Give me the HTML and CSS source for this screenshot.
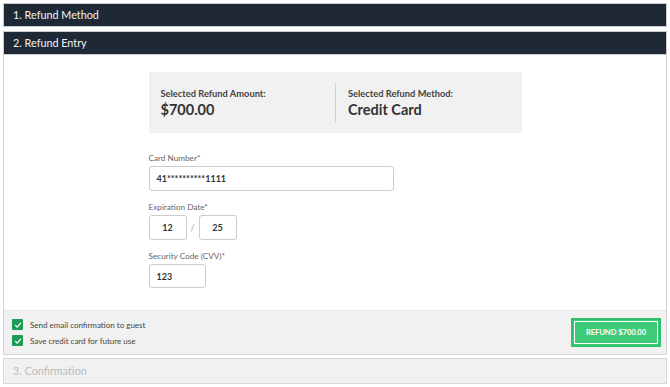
FILE: index.html
```html
<!DOCTYPE html>
<html lang="en">
<head>
    <meta charset="utf-8">
    <title>Refund</title>
    <link rel="stylesheet" href="styles.css">
</head>
<body>

<div class="step-header">1. Refund Method</div>

<div class="step-panel">
    <div class="step-header">2. Refund Entry</div>
    <div class="step-body">
        <div class="form-column">
            <div class="summary">
                <div class="summary-item">
                    <div class="summary-label">Selected Refund Amount:</div>
                    <div class="summary-value">$700.00</div>
                </div>
                <div class="summary-item with-divider">
                    <div class="summary-label">Selected Refund Method:</div>
                    <div class="summary-value">Credit Card</div>
                </div>
            </div>

            <label class="field-label">Card Number*</label>
            <div class="input card-input">41**********1111</div>

            <label class="field-label">Expiration Date*</label>
            <div class="date-row">
                <div class="input date-input">12</div>
                <span class="slash">/</span>
                <div class="input date-input">25</div>
            </div>

            <label class="field-label">Security Code (CVV)*</label>
            <div class="input cvv-input">123</div>
        </div>
    </div>
    <div class="step-footer">
        <div class="checks">
            <div class="check-row">
                <span class="checkbox">
                    <svg width="8" height="8" viewBox="0 0 10 10"><path d="M1.5 5.2 L4 7.6 L8.6 2.4" fill="none" stroke="#fff" stroke-width="1.6"/></svg>
                </span>
                Send email confirmation to guest
            </div>
            <div class="check-row">
                <span class="checkbox">
                    <svg width="8" height="8" viewBox="0 0 10 10"><path d="M1.5 5.2 L4 7.6 L8.6 2.4" fill="none" stroke="#fff" stroke-width="1.6"/></svg>
                </span>
                Save credit card for future use
            </div>
        </div>
        <button class="refund-button">REFUND $700.00</button>
    </div>
</div>

<div class="step-disabled">3. Confirmation</div>

</body>
</html>
```

FILE: styles.css
```css
body {
    font-family: Lato, "Open Sans", sans-serif;
    margin: 0;
    padding: 3px;
    background-color: #fff;
    color: #333;
}

.step-header {
    height: 24px;
    line-height: 22px;
    padding-left: 9px;
    background-color: #1e2935;
    border: 1px solid #c9ccd0;
    color: #f4f4f4;
    font-size: 10.8px;
    box-sizing: border-box;
}

.step-panel {
    margin-top: 4px;
    border: 1px solid #d4d4d4;
    border-top: none;
}

.step-panel .step-header {
    margin: 0 -1px;
}

.step-body {
    padding: 17px 0 22px;
}

.form-column {
    width: 373px;
    margin: 0 auto;
    display: flex;
    flex-direction: column;
    align-items: flex-start;
}

.summary {
    width: 100%;
    height: 61px;
    background-color: #f1f1f1;
    display: grid;
    grid-template-columns: 1fr 1fr;
    align-items: center;
    margin-bottom: 19px;
}

.summary-item {
    padding-left: 12px;
}

.summary-item.with-divider {
    border-left: 1px solid #d0d0d0;
    padding: 5px 0 5px 12px;
}

.summary-label {
    font-size: 9.3px;
    font-weight: bold;
    color: #444;
}

.summary-value {
    font-size: 14.5px;
    font-weight: bold;
    color: #333;
    margin-top: 2px;
}

.field-label {
    font-size: 8.2px;
    line-height: 12px;
    color: #666;
    margin-bottom: 2px;
}

.input {
    height: 25px;
    line-height: 23px;
    border: 1px solid #ccc;
    border-radius: 3px;
    box-sizing: border-box;
    padding-left: 7px;
    font-size: 9px;
    font-weight: bold;
    color: #333;
    background-color: #fff;
    margin-bottom: 10px;
}

.card-input {
    width: 245px;
}

.date-row {
    display: flex;
    align-items: flex-start;
}

.date-input {
    width: 38px;
    padding-left: 0;
    text-align: center;
}

.slash {
    width: 12px;
    text-align: center;
    line-height: 25px;
    font-size: 10px;
    color: #aaa;
}

.cvv-input {
    width: 57px;
    height: 24px;
    margin-bottom: 0;
}

.step-footer {
    background-color: #f1f1f1;
    border-top: 1px solid #e6e6e6;
    height: 43px;
    display: flex;
    align-items: center;
    justify-content: space-between;
    padding: 0 5px 0 8px;
}

.checks {
    display: flex;
    flex-direction: column;
    gap: 5px;
}

.check-row {
    display: flex;
    align-items: center;
    font-size: 8px;
    color: #444;
}

.checkbox {
    width: 11px;
    height: 11px;
    background-color: #1e9b57;
    border-radius: 1px;
    display: flex;
    align-items: center;
    justify-content: center;
    margin-right: 7px;
}

.refund-button {
    width: 90px;
    height: 29px;
    background-color: #3ecb79;
    border: 2px solid #33c06e;
    outline: 1px solid #fff;
    outline-offset: -4px;
    color: #fff;
    font-family: Lato, sans-serif;
    font-size: 7.5px;
    font-weight: bold;
    padding: 0;
    cursor: pointer;
}

.step-disabled {
    margin-top: 3px;
    height: 26px;
    line-height: 24px;
    padding-left: 9px;
    background-color: #f1f1f1;
    border: 1px solid #d8d8d8;
    color: #bbb;
    font-size: 10.8px;
    box-sizing: border-box;
}
```
